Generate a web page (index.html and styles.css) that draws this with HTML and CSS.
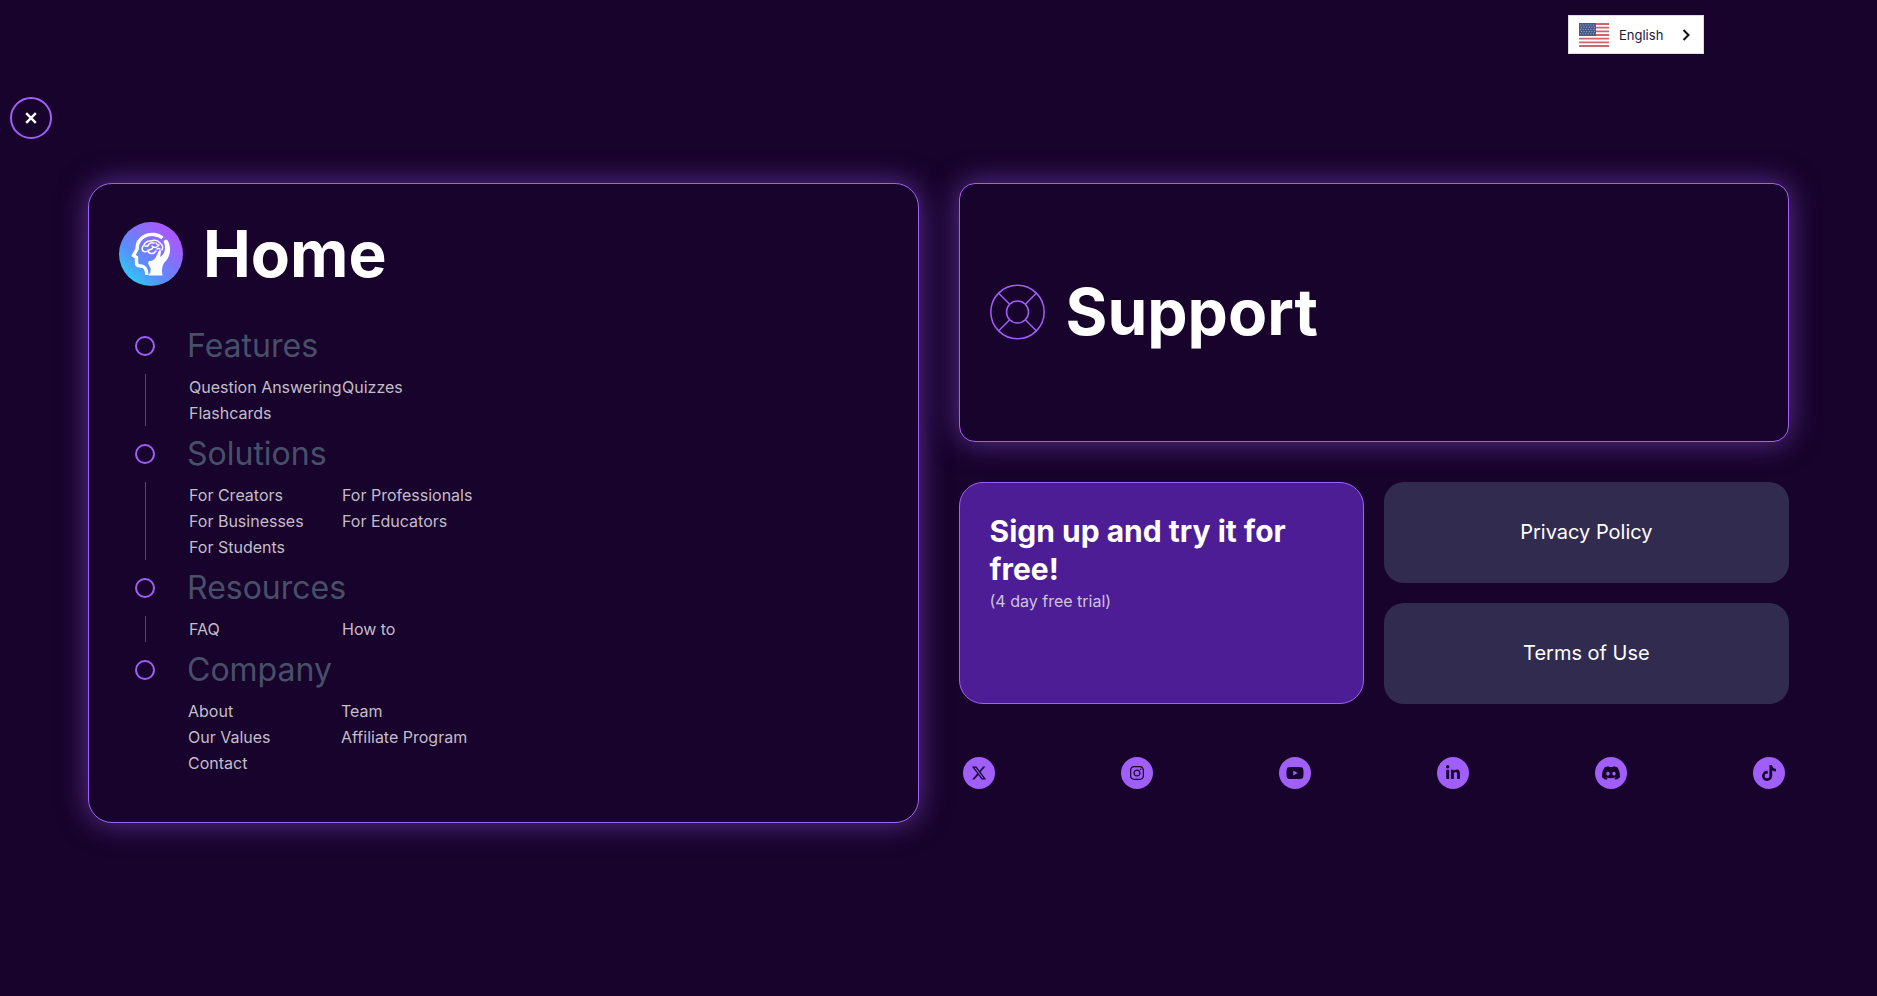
FILE: index.html
```html
<!DOCTYPE html>
<html lang="en">
  <head>
    <meta charset="utf-8">
    <meta name="viewport" content="width=device-width, initial-scale=1.0">
    <title>Menu</title>
    <link rel="stylesheet" href="styles.css">
  </head>
  <body>
    <header class="topbar">
      <button class="lang" type="button">
        <svg class="lang-flag" viewBox="0 0 30 24" aria-hidden="true">
          <rect width="30" height="24" fill="#fff"/>
          <path d="M0 1h30M0 4.6h30M0 8.3h30M0 12h30M0 15.6h30M0 19.3h30M0 23h30" stroke="#d0646e" stroke-width="1.8"/>
          <rect width="17" height="13" fill="#46598a"/>
          <path d="M1 2h16M2 4.2h15M1 6.4h16M2 8.6h15M1 10.8h16" stroke="#a9b3cb" stroke-width="1" stroke-dasharray="1 1.6"/>
        </svg>
        <span class="lang-name">English</span>
        <svg class="lang-arrow" viewBox="0 0 8 12" aria-hidden="true"><path d="M1.5 1l5 5-5 5"/></svg>
      </button>
    </header>

    <button class="close" type="button" aria-label="Close menu">
      <svg viewBox="0 0 10 10" aria-hidden="true"><path d="M1 1l8 8M9 1l-8 8"/></svg>
    </button>

    <main class="menu">
      <!-- left column -->
      <section class="card home">
        <a class="title" href="#">
          <svg class="logo" viewBox="0 0 64 64" aria-hidden="true">
            <defs>
              <linearGradient id="logoBg" x1="0.12" y1="0.88" x2="0.8" y2="0.15">
                <stop offset="0" stop-color="#2bcdf5"/>
                <stop offset="0.35" stop-color="#5b8dfb"/>
                <stop offset="1" stop-color="#a958fe"/>
              </linearGradient>
            </defs>
            <circle cx="32" cy="32" r="32" fill="url(#logoBg)"/>
            <path d="M43.5 16C39 12 31 11 25 14.500C19.500 17.500 18 22 18 27L14.500 33.500L17.500 35.500L17.500 40.500Q17.500 44 21 44Q27.500 43.500 28 53" fill="none" stroke="#fff" stroke-width="3.400"/>
            <path d="M44.500 19Q48 15.500 49.500 20C53 28 50.500 36 45 41Q42 45 43.500 53.500H29.500Q33 49 31 45Q28 41 30 39Q35 39.500 37.500 34L40 28.500Q42 27 42 30L41 35Q46 32 46 26Q46 22 44.500 19Z" fill="#fff"/>
            <g fill="none" stroke="#fff" stroke-width="1.500" stroke-linecap="round">
              <path d="M24 29Q22 26 25 23Q27 18.500 32 19Q38 17 41 21Q45 24 43 28"/>
              <path d="M24 29Q27 31 30 28L33 27M26 24Q29 25 30 22Q32 20 35 21M29 28Q29 31 32 31.500Q35 32 37 29M33 24Q36 27 39 24M37 21Q38 23 40 23M33 27L34 25M38 27Q40 26 41 27"/>
            </g>
          </svg>
          <span>Home</span>
        </a>
        <div class="timeline">
          <div class="group">
            <h2 class="group-title">Features</h2>
            <div class="links">
              <a href="#">Question Answering</a>
              <a href="#">Quizzes</a>
              <a href="#">Flashcards</a>
            </div>
          </div>
          <div class="group">
            <h2 class="group-title">Solutions</h2>
            <div class="links">
              <a href="#">For Creators</a>
              <a href="#">For Professionals</a>
              <a href="#">For Businesses</a>
              <a href="#">For Educators</a>
              <a href="#">For Students</a>
            </div>
          </div>
          <div class="group">
            <h2 class="group-title">Resources</h2>
            <div class="links">
              <a href="#">FAQ</a>
              <a href="#">How to</a>
            </div>
          </div>
          <div class="group">
            <h2 class="group-title">Company</h2>
            <div class="links">
              <a href="#">About</a>
              <a href="#">Team</a>
              <a href="#">Our Values</a>
              <a href="#">Affiliate Program</a>
              <a href="#">Contact</a>
            </div>
          </div>
        </div>
      </section>

      <!-- right column -->
      <div class="side">
        <section class="card support">
          <a class="title" href="#">
            <svg class="support-icon" viewBox="0 0 56 56" aria-hidden="true">
              <circle cx="27.5" cy="28" r="26.700"/>
              <circle cx="27.5" cy="28" r="11"/>
              <path d="M8.700 9.200l11 11M46.300 9.200l-11 11M8.700 46.800l11-11M46.300 46.800l-11-11"/>
            </svg>
            <span>Support</span>
          </a>
        </section>

        <div class="actions">
          <a class="signup" href="#">
            <strong>Sign up and try it for free!</strong>
            <span>(4 day free trial)</span>
          </a>
          <div class="legal">
            <a href="#">Privacy Policy</a>
            <a href="#">Terms of Use</a>
          </div>
        </div>

        <nav class="social" aria-label="Social media">
          <a href="#" aria-label="X">
            <svg viewBox="0 0 512 512"><path d="M389.200 48h70.600L305.600 224.200 487 464H345L233.700 318.600 106.500 464H35.800L200.700 275.500 26.800 48H172.400L272.900 180.900 389.200 48zM364.400 421.800h39.100L151.100 88h-42L364.400 421.800z"/></svg>
          </a>
          <a href="#" aria-label="Instagram">
            <svg viewBox="0 0 448 512"><path d="M224.100 141c-63.600 0-114.900 51.300-114.900 114.900s51.300 114.900 114.900 114.900S339 319.500 339 255.900 287.700 141 224.100 141zm0 189.600c-41.100 0-74.700-33.500-74.700-74.700s33.500-74.700 74.700-74.700 74.700 33.500 74.700 74.700-33.600 74.700-74.700 74.700zm146.400-194.300c0 14.900-12 26.800-26.800 26.800-14.900 0-26.800-12-26.800-26.800s12-26.800 26.800-26.800 26.800 12 26.800 26.800zm76.100 27.200c-1.700-35.900-9.900-67.700-36.200-93.900-26.200-26.200-58-34.400-93.900-36.200-37-2.100-147.900-2.100-184.900 0-35.800 1.700-67.600 9.900-93.900 36.100s-34.400 58-36.200 93.900c-2.100 37-2.100 147.900 0 184.900 1.700 35.900 9.900 67.700 36.200 93.900s58 34.400 93.900 36.200c37 2.100 147.900 2.100 184.900 0 35.900-1.700 67.700-9.900 93.900-36.200 26.200-26.200 34.400-58 36.200-93.900 2.100-37 2.100-147.800 0-184.800zM398.800 388c-7.800 19.600-22.900 34.700-42.600 42.600-29.500 11.700-99.500 9-132.100 9s-102.700 2.600-132.100-9c-19.600-7.800-34.700-22.900-42.600-42.600-11.700-29.500-9-99.500-9-132.100s-2.600-102.700 9-132.100c7.800-19.600 22.900-34.700 42.600-42.600 29.500-11.700 99.500-9 132.100-9s102.700-2.600 132.100 9c19.600 7.800 34.700 22.900 42.600 42.600 11.700 29.500 9 99.500 9 132.100s2.700 102.700-9 132.100z"/></svg>
          </a>
          <a href="#" aria-label="YouTube">
            <svg viewBox="0 0 576 512"><path d="M549.655 124.083c-6.281-23.650-24.787-42.276-48.284-48.597C458.781 64 288 64 288 64S117.220 64 74.629 75.486c-23.497 6.322-42.003 24.947-48.284 48.597-11.412 42.867-11.412 132.305-11.412 132.305s0 89.438 11.412 132.305c6.281 23.650 24.787 41.500 48.284 47.821C117.220 448 288 448 288 448s170.780 0 213.371-11.486c23.497-6.321 42.003-24.171 48.284-47.821 11.412-42.867 11.412-132.305 11.412-132.305s0-89.438-11.412-132.305zm-317.510 213.508V175.185l142.739 81.205-142.739 81.201z"/></svg>
          </a>
          <a href="#" aria-label="LinkedIn">
            <svg viewBox="0 0 448 512"><path d="M100.280 448H7.400V148.900h92.880zM53.790 108.100C24.090 108.100 0 83.500 0 53.800a53.790 53.790 0 0 1 107.580 0c0 29.700-24.100 54.300-53.790 54.300zM447.900 448h-92.680V302.400c0-34.700-.7-79.200-48.290-79.200-48.290 0-55.690 37.700-55.690 76.700V448h-92.780V148.900h89.080v40.800h1.300c12.400-23.500 42.690-48.300 87.880-48.300 94 0 111.280 61.900 111.280 142.300V448z"/></svg>
          </a>
          <a href="#" aria-label="Discord">
            <svg class="discord" viewBox="0 0 24 24"><path d="M20.317 4.370a19.791 19.791 0 0 0-4.885-1.515.074.074 0 0 0-.079.037c-.211.375-.445.865-.608 1.250-1.845-.276-3.680-.276-5.487 0-.164-.393-.406-.874-.618-1.250a.077.077 0 0 0-.079-.037 19.736 19.736 0 0 0-4.885 1.515.070.070 0 0 0-.032.028C.533 9.046-.319 13.580.099 18.058a.082.082 0 0 0 .031.056c2.053 1.508 4.041 2.423 5.993 3.029a.078.078 0 0 0 .084-.028c.462-.630.873-1.295 1.226-1.994a.076.076 0 0 0-.042-.106c-.653-.248-1.274-.550-1.872-.892a.077.077 0 0 1-.008-.128c.126-.094.252-.192.372-.291a.074.074 0 0 1 .078-.011c3.928 1.793 8.180 1.793 12.061 0a.074.074 0 0 1 .079.010c.120.099.246.198.373.292a.077.077 0 0 1-.007.128 12.299 12.299 0 0 1-1.873.891.077.077 0 0 0-.041.107c.360.698.772 1.363 1.225 1.993a.076.076 0 0 0 .084.029c1.961-.607 3.950-1.522 6.002-3.029a.077.077 0 0 0 .031-.055c.500-5.177-.838-9.674-3.549-13.660a.061.061 0 0 0-.031-.029zM8.020 15.331c-1.183 0-2.157-1.086-2.157-2.419 0-1.333.956-2.419 2.157-2.419 1.211 0 2.176 1.095 2.157 2.419 0 1.333-.956 2.419-2.157 2.419zm7.975 0c-1.183 0-2.157-1.086-2.157-2.419 0-1.333.955-2.419 2.157-2.419 1.211 0 2.176 1.095 2.157 2.419 0 1.333-.946 2.419-2.157 2.419z"/></svg>
          </a>
          <a href="#" aria-label="TikTok">
            <svg viewBox="0 0 448 512"><path d="M448 209.910a210.060 210.060 0 0 1-122.770-39.250V349.380A162.550 162.550 0 1 1 185 188.310V278.200a74.620 74.620 0 1 0 52.230 71.180V0l88 0a121.180 121.180 0 0 0 1.860 22.170A122.180 122.180 0 0 0 381 102.390a121.430 121.430 0 0 0 67 20.140z"/></svg>
          </a>
        </nav>
      </div>
    </main>
  </body>
</html>
```

FILE: styles.css
```css
*,
*::before {
  box-sizing: border-box;
}
body {
  margin: 0;
  min-height: 100vh;
  background-color: #17032b;
  color: #fff;
  font-family: Inter, sans-serif;
  font-size: 16px;
  line-height: 26px;
}
a {
  color: inherit;
  text-decoration: none;
}
button {
  font-family: inherit;
  cursor: pointer;
}
svg {
  display: block;
}
/* language switcher */
.topbar {
  display: flex;
  justify-content: flex-end;
  padding: 15px 173px 0 0;
}
.lang {
  display: flex;
  align-items: center;
  width: 136px;
  height: 39px;
  padding: 0 13px 0 10px;
  border: 1px solid #ddd;
  background-color: #fff;
  color: #1a1a3a;
  font-size: 13px;
}
.lang-flag {
  width: 30px;
  height: 24px;
  margin-right: 10px;
}
.lang-arrow {
  width: 8px;
  height: 12px;
  margin-left: auto;
  fill: none;
  stroke: #111;
  stroke-width: 2;
}
/* close button */
.close {
  display: flex;
  align-items: center;
  justify-content: center;
  width: 42px;
  height: 42px;
  margin: 43px 0 44px 10px;
  padding: 0;
  border: 2px solid #a15ffa;
  border-radius: 50%;
  background: none;
}
.close svg {
  width: 12px;
  height: 12px;
  stroke: #fff;
  stroke-width: 2;
}
/* page grid */
.menu {
  display: grid;
  grid-template-columns: 1fr 1fr;
  gap: 40px;
  padding: 0 88px 88px;
}
.card {
  padding: 31px 30px;
  border: 1px solid #a15ffa;
  border-radius: 24px;
  background-color: #17032b;
  box-shadow: 0 0 30px rgba(161, 95, 250, 0.5);
}
.title {
  display: flex;
  align-items: center;
  gap: 20px;
  font-size: 64px;
  font-weight: 700;
  line-height: 78px;
}
.logo {
  width: 64px;
  height: 64px;
}
/* timeline */
.timeline {
  padding: 25px 0 15px 16px;
}
.group-title {
  display: flex;
  align-items: center;
  gap: 32px;
  height: 56px;
  margin: 0;
  color: #475069;
  font-size: 32px;
  font-weight: 400;
}
.group-title::before {
  content: "";
  width: 20px;
  height: 20px;
  border: 2px solid #a15ffa;
  border-radius: 50%;
}
.links {
  display: grid;
  grid-template-columns: 153px 153px;
  margin-left: 10px;
  padding-left: 43px;
  border-left: 1px solid #475069;
  color: #c4bdca;
  white-space: nowrap;
}
.group:last-child .links {
  border-left: none;
}
/* right column */
.side {
  display: flex;
  flex-direction: column;
  gap: 40px;
}
.support {
  padding: 89px 30px 90px;
  border-radius: 16px;
}
.support-icon {
  width: 56px;
  height: 56px;
  fill: none;
  stroke: #a15ffa;
  stroke-width: 1.5;
}
.actions {
  display: grid;
  grid-template-columns: 1fr 1fr;
  gap: 20px;
}
.signup {
  display: flex;
  flex-direction: column;
  padding: 29px 30px;
  border: 1px solid #a15ffa;
  border-radius: 24px;
  background-color: #4c1d95;
}
.signup strong {
  font-size: 30px;
  font-weight: 700;
  line-height: 38px;
}
.signup span {
  color: #cfc3e3;
}
.legal {
  display: flex;
  flex-direction: column;
  gap: 20px;
}
.legal a {
  padding: 37px 20px 38px;
  border-radius: 20px;
  background-color: #322b50;
  font-size: 20px;
  text-align: center;
}
/* social links */
.social {
  display: flex;
  justify-content: space-between;
  padding: 13px 4px;
}
.social a {
  display: flex;
  align-items: center;
  justify-content: center;
  width: 32px;
  height: 32px;
  border-radius: 50%;
  background-color: #a15ffa;
}
.social svg {
  height: 16px;
  fill: #17032b;
}
.social .discord {
  height: 18px;
}
```
